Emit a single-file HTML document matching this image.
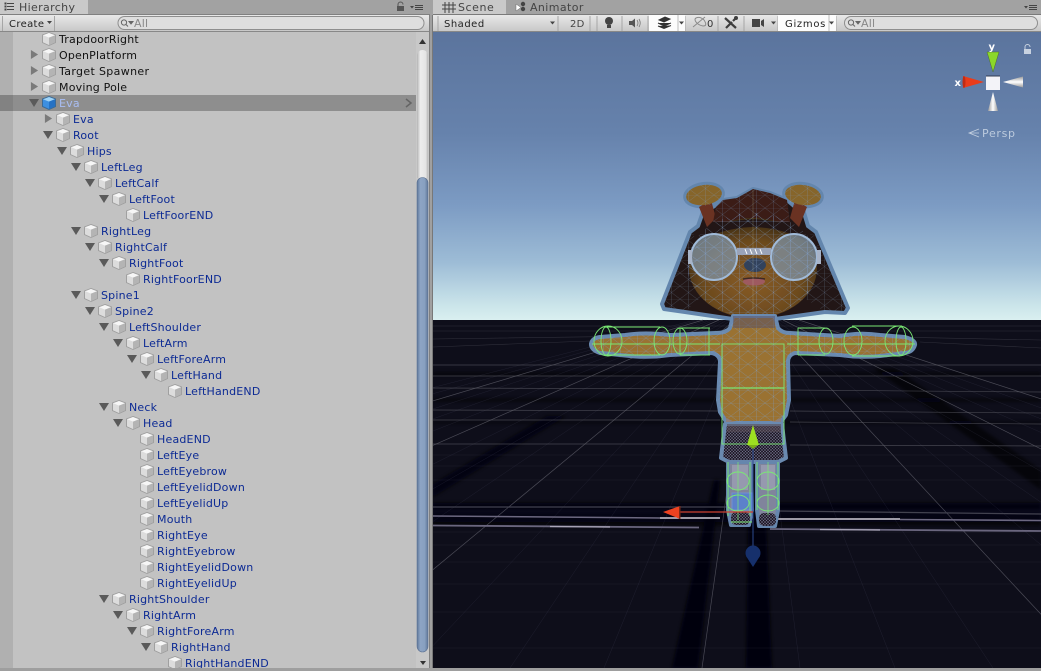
<!DOCTYPE html>
<html><head><meta charset="utf-8"><style>
html,body{margin:0;padding:0;background:#a2a2a2;width:1041px;height:671px;overflow:hidden}
svg{display:block}
text{font-family:"DejaVu Sans","Liberation Sans",sans-serif;font-size:11px;letter-spacing:.2px}
.k{fill:#111}
.b{fill:#0c2a94}
</style></head><body>
<svg width="1041" height="671" viewBox="0 0 1041 671" xmlns="http://www.w3.org/2000/svg">
<defs>
<linearGradient id="sky" x1="0" y1="0" x2="0" y2="1">
<stop offset="0" stop-color="#5b749d"/><stop offset=".35" stop-color="#6682ac"/><stop offset=".6" stop-color="#7c9bc3"/><stop offset=".8" stop-color="#9dbcd6"/><stop offset=".95" stop-color="#cbe5ea"/><stop offset="1" stop-color="#d9eff0"/>
</linearGradient>
<linearGradient id="tb" x1="0" y1="0" x2="0" y2="1"><stop offset="0" stop-color="#e8e8e8"/><stop offset="1" stop-color="#c6c6c6"/></linearGradient>
<linearGradient id="thumb" x1="0" y1="0" x2="1" y2="0"><stop offset="0" stop-color="#5d7699"/><stop offset=".3" stop-color="#8da4c4"/><stop offset=".7" stop-color="#88a0c0"/><stop offset="1" stop-color="#5f7698"/></linearGradient>
<linearGradient id="sb" x1="0" y1="0" x2="1" y2="0"><stop offset="0" stop-color="#b4b4b4"/><stop offset=".3" stop-color="#ededed"/><stop offset=".8" stop-color="#e4e4e4"/><stop offset="1" stop-color="#b8b8b8"/></linearGradient>
<linearGradient id="wc" x1="0" y1="0" x2="0" y2="1"><stop offset="0" stop-color="#999"/><stop offset=".5" stop-color="#fff"/><stop offset="1" stop-color="#999"/></linearGradient>
<linearGradient id="wc2" x1="0" y1="0" x2="1" y2="0"><stop offset="0" stop-color="#999"/><stop offset=".5" stop-color="#fff"/><stop offset="1" stop-color="#999"/></linearGradient>
<radialGradient id="face" cx=".5" cy=".62" r=".55"><stop offset="0" stop-color="#8a5c26"/><stop offset=".7" stop-color="#6c4a1e"/><stop offset="1" stop-color="#443016"/></radialGradient>
<pattern id="wire" width="17" height="13" patternUnits="userSpaceOnUse"><path d="M0 0H17M0 0L17 13M17 0L0 13M8.500 0V13" stroke="#7d9cc6" stroke-width=".5" fill="none" opacity=".55"/></pattern>
<pattern id="mesh" width="3" height="3" patternUnits="userSpaceOnUse"><rect width="3" height="3" fill="#201d2c"/><path d="M0 0L3 3M3 0L0 3" stroke="#70708a" stroke-width=".5"/></pattern>
<filter id="bl"><feGaussianBlur stdDeviation="1.500"/></filter>
<filter id="so"><feGaussianBlur stdDeviation=".35"/></filter>
<clipPath id="sc"><rect x="433" y="32" width="608" height="636"/></clipPath>
<symbol id="c" viewBox="0 0 14 14" overflow="visible">
<path d="M7 0.5L13.5 3V10.5L7 13.5L.5 10.5V3Z" fill="#e6e6e6" stroke="#a0a0a0" stroke-width="1"/>
<path d="M1 3.200L7 5.600L13 3.200L7 1Z" fill="#f6f6f6"/>
<path d="M7 5.600V13L13 10.200V3.200Z" fill="#b4b4b4"/>
<path d="M7 5.600V13L1 10.200V3.200Z" fill="#dcdcdc"/>
</symbol>
<symbol id="r" viewBox="0 0 10 10" overflow="visible"><path d="M1 0L9 5L1 10Z" fill="#7a7a7a"/></symbol>
<symbol id="d" viewBox="0 0 10 10" overflow="visible"><path d="M0 1H10L5 9Z" fill="#5a5a5a"/></symbol>
</defs>

<rect width="1041" height="671" fill="#a2a2a2"/>

<!-- Hierarchy panel -->
<rect x="0" y="31" width="430" height="637" fill="#c2c2c2"/>
<rect x="0" y="31" width="13" height="637" fill="#b0b0b0"/>
<rect x="0" y="0" width="88" height="15" fill="#c9c9c9"/>
<path d="M5 3h1v1H5zM5 6h1v1H5zM5 9h1v1H5zM7 3.500h7M7 6.500h7M7 9.500h7" stroke="#444" stroke-width="1" fill="none"/>
<text x="19" y="11" style="font-size:11px;letter-spacing:.35px" fill="#444">Hierarchy</text>
<rect x="0" y="15" width="430" height="17" fill="url(#tb)"/>
<rect x="0" y="14" width="430" height="1" fill="#808080"/>
<rect x="0" y="31" width="430" height="1" fill="#888"/>
<rect x="2" y="16" width="1" height="15" fill="#a6a6a6"/>
<rect x="54" y="16" width="1" height="15" fill="#a6a6a6"/>
<text x="9" y="27" style="font-size:10px;letter-spacing:.35px" fill="#222">Create</text>
<path d="M47 21h5l-2.500 3z" fill="#444"/>
<rect x="118" y="16.500" width="306" height="13" rx="6.500" fill="#dedede" stroke="#8e8e8e"/>
<circle cx="124" cy="22.500" r="2.600" fill="none" stroke="#666"/><path d="M126 24.500l2 2M129 21.500h4l-2 2.500z" stroke="#666" fill="#666"/>
<text x="134" y="27" style="font-size:11px" fill="#888">All</text>
<path d="M398 6.500v-2a2.500 2.500 0 0 1 5 0" fill="none" stroke="#555"/><rect x="397" y="6" width="7" height="5" fill="#555"/>
<path d="M410 6h4l-2 2.500z" fill="#444"/><path d="M415 5.500h8M415 7.500h8M415 9.500h8" stroke="#444"/>

<rect x="0" y="95" width="416" height="16" fill="#8e8e8e"/>
<rect x="0" y="95" width="13" height="16" fill="#828282"/>
<path d="M406 99l5 4-5 4" fill="none" stroke="#646464" stroke-width="1.500"/>

<use href="#c" x="42" y="32" width="14" height="14"/><text class="k" x="59" y="43">TrapdoorRight</text>
<use href="#r" x="30" y="50" width="9" height="9"/><use href="#c" x="42" y="48" width="14" height="14"/><text class="k" x="59" y="59">OpenPlatform</text>
<use href="#r" x="30" y="66" width="9" height="9"/><use href="#c" x="42" y="64" width="14" height="14"/><text class="k" x="59" y="75" style="letter-spacing:.35px">Target Spawner</text>
<use href="#r" x="30" y="82" width="9" height="9"/><use href="#c" x="42" y="80" width="14" height="14"/><text class="k" x="59" y="91">Moving Pole</text>
<use href="#d" x="29" y="98" width="10" height="10"/>
<path d="M49 96.500L55.500 99V106.500L49 109.500L42.500 106.500V99Z" fill="#3d8fe0" stroke="#3b6a96"/><path d="M43 99.200L49 101.600L55 99.200L49 97Z" fill="#9fd3f6"/><path d="M49 101.600V109L55 106.200V99.200Z" fill="#2672c4"/>
<text x="59" y="107" fill="#a9bdf2">Eva</text>
<use href="#r" x="44" y="114" width="9" height="9"/><use href="#c" x="56" y="112" width="14" height="14"/><text class="b" x="73" y="123">Eva</text>
<use href="#d" x="43" y="130" width="10" height="10"/><use href="#c" x="56" y="128" width="14" height="14"/><text class="b" x="73" y="139">Root</text>
<use href="#d" x="57" y="146" width="10" height="10"/><use href="#c" x="70" y="144" width="14" height="14"/><text class="b" x="87" y="155">Hips</text>
<use href="#d" x="71" y="162" width="10" height="10"/><use href="#c" x="84" y="160" width="14" height="14"/><text class="b" x="101" y="171">LeftLeg</text>
<use href="#d" x="85" y="178" width="10" height="10"/><use href="#c" x="98" y="176" width="14" height="14"/><text class="b" x="115" y="187">LeftCalf</text>
<use href="#d" x="99" y="194" width="10" height="10"/><use href="#c" x="112" y="192" width="14" height="14"/><text class="b" x="129" y="203">LeftFoot</text>
<use href="#c" x="126" y="208" width="14" height="14"/><text class="b" x="143" y="219">LeftFoorEND</text>
<use href="#d" x="71" y="226" width="10" height="10"/><use href="#c" x="84" y="224" width="14" height="14"/><text class="b" x="101" y="235">RightLeg</text>
<use href="#d" x="85" y="242" width="10" height="10"/><use href="#c" x="98" y="240" width="14" height="14"/><text class="b" x="115" y="251">RightCalf</text>
<use href="#d" x="99" y="258" width="10" height="10"/><use href="#c" x="112" y="256" width="14" height="14"/><text class="b" x="129" y="267">RightFoot</text>
<use href="#c" x="126" y="272" width="14" height="14"/><text class="b" x="143" y="283">RightFoorEND</text>
<use href="#d" x="71" y="290" width="10" height="10"/><use href="#c" x="84" y="288" width="14" height="14"/><text class="b" x="101" y="299">Spine1</text>
<use href="#d" x="85" y="306" width="10" height="10"/><use href="#c" x="98" y="304" width="14" height="14"/><text class="b" x="115" y="315">Spine2</text>
<use href="#d" x="99" y="322" width="10" height="10"/><use href="#c" x="112" y="320" width="14" height="14"/><text class="b" x="129" y="331">LeftShoulder</text>
<use href="#d" x="113" y="338" width="10" height="10"/><use href="#c" x="126" y="336" width="14" height="14"/><text class="b" x="143" y="347">LeftArm</text>
<use href="#d" x="127" y="354" width="10" height="10"/><use href="#c" x="140" y="352" width="14" height="14"/><text class="b" x="157" y="363">LeftForeArm</text>
<use href="#d" x="141" y="370" width="10" height="10"/><use href="#c" x="154" y="368" width="14" height="14"/><text class="b" x="171" y="379">LeftHand</text>
<use href="#c" x="168" y="384" width="14" height="14"/><text class="b" x="185" y="395">LeftHandEND</text>
<use href="#d" x="99" y="402" width="10" height="10"/><use href="#c" x="112" y="400" width="14" height="14"/><text class="b" x="129" y="411">Neck</text>
<use href="#d" x="113" y="418" width="10" height="10"/><use href="#c" x="126" y="416" width="14" height="14"/><text class="b" x="143" y="427">Head</text>
<use href="#c" x="140" y="432" width="14" height="14"/><text class="b" x="157" y="443">HeadEND</text>
<use href="#c" x="140" y="448" width="14" height="14"/><text class="b" x="157" y="459">LeftEye</text>
<use href="#c" x="140" y="464" width="14" height="14"/><text class="b" x="157" y="475">LeftEyebrow</text>
<use href="#c" x="140" y="480" width="14" height="14"/><text class="b" x="157" y="491">LeftEyelidDown</text>
<use href="#c" x="140" y="496" width="14" height="14"/><text class="b" x="157" y="507">LeftEyelidUp</text>
<use href="#c" x="140" y="512" width="14" height="14"/><text class="b" x="157" y="523">Mouth</text>
<use href="#c" x="140" y="528" width="14" height="14"/><text class="b" x="157" y="539">RightEye</text>
<use href="#c" x="140" y="544" width="14" height="14"/><text class="b" x="157" y="555">RightEyebrow</text>
<use href="#c" x="140" y="560" width="14" height="14"/><text class="b" x="157" y="571">RightEyelidDown</text>
<use href="#c" x="140" y="576" width="14" height="14"/><text class="b" x="157" y="587">RightEyelidUp</text>
<use href="#d" x="99" y="594" width="10" height="10"/><use href="#c" x="112" y="592" width="14" height="14"/><text class="b" x="129" y="603">RightShoulder</text>
<use href="#d" x="113" y="610" width="10" height="10"/><use href="#c" x="126" y="608" width="14" height="14"/><text class="b" x="143" y="619">RightArm</text>
<use href="#d" x="127" y="626" width="10" height="10"/><use href="#c" x="140" y="624" width="14" height="14"/><text class="b" x="157" y="635">RightForeArm</text>
<use href="#d" x="141" y="642" width="10" height="10"/><use href="#c" x="154" y="640" width="14" height="14"/><text class="b" x="171" y="651">RightHand</text>
<use href="#c" x="168" y="656" width="14" height="14"/><text class="b" x="185" y="667">RightHandEND</text>

<!-- scrollbar -->
<rect x="416" y="32" width="13" height="636" fill="#c8c8c8"/>
<path d="M419 44h7l-3.500-5z" fill="#333"/>
<path d="M417 55.500a5.500 5.500 0 0 1 11 0V178H417Z" fill="url(#sb)"/>
<path d="M417 183a5.500 5.500 0 0 1 11 0V646a5.500 6 0 0 1-11 0Z" fill="url(#thumb)" stroke="#5a6f90" stroke-width=".6"/>
<path d="M420 661h6l-3 4z" fill="#333"/>
<rect x="429" y="15" width="4" height="653" fill="#a0a0a0"/>
<rect x="429" y="15" width="1" height="653" fill="#808080"/>
<rect x="432" y="15" width="1" height="653" fill="#787878"/>

<!-- Scene tabs -->
<rect x="433" y="0" width="73" height="15" fill="#c9c9c9"/>
<path d="M445 2v11M449 2v11M453 2v11M442 5h14M442 9h14" stroke="#444" fill="none" stroke-width="1"/>
<text x="458" y="11" style="font-size:11px;letter-spacing:.55px" fill="#444">Scene</text>
<circle cx="523" cy="4" r="2.200" fill="#444"/><circle cx="523" cy="9" r="2.200" fill="#444"/><path d="M516 4l5 3.500-5 3.500z" fill="#fff" stroke="#555" stroke-width=".4"/>
<text x="530" y="11" style="font-size:11px;letter-spacing:.4px" fill="#444">Animator</text>
<path d="M1024 6h4l-2 2.500z" fill="#444"/><path d="M1029 5.500h8M1029 7.500h8M1029 9.500h8" stroke="#444"/>

<!-- Scene toolbar -->
<rect x="433" y="15" width="608" height="17" fill="url(#tb)"/>
<rect x="433" y="14" width="608" height="1" fill="#7a7a7a"/>
<rect x="433" y="31" width="608" height="1" fill="#888"/>
<path d="M438 16v15M558 16v15M590 16v15M597 16v15M622 16v15M648 16v15M685 16v15M718 16v15M744 16v15M778 16v15M836 16v15" stroke="#a6a6a6" fill="none"/>
<rect x="649" y="15" width="36" height="16" fill="#fcfcfc"/>
<rect x="778" y="15" width="58" height="16" fill="#fcfcfc"/>
<path d="M678 15v16M829 15v16" stroke="#bbb"/>
<text x="444" y="27" style="font-size:10px;letter-spacing:.5px" fill="#222">Shaded</text>
<path d="M550 21.500h5l-2.500 3z" fill="#444"/>
<text x="570" y="27" style="font-size:10px;letter-spacing:.3px" fill="#444">2D</text>
<circle cx="609" cy="21" r="4" fill="#444"/><rect x="607" y="25" width="4" height="3" fill="#444"/>
<path d="M629 21h3l3-2.500v9l-3-2.500h-3z" fill="#555"/><path d="M637 20q2 3 0 6M639 19q2.500 4 0 8" stroke="#777" fill="none" stroke-width=".8"/>
<path d="M659 20l6-3 5 2-6 3zM658 23l6 3 7-3M658 26l6 2.500 7-3" fill="#333" stroke="#333" stroke-width="1"/>
<path d="M679 21.500h5l-2.500 3z" fill="#444"/>
<path d="M693 27l12-10M696 18q4-2 8 2q4 6-1 6q-5-1-7-4q-2-3 0-4" stroke="#8a8a8a" fill="none" stroke-width="1"/>
<text x="707" y="27" style="font-size:10px" fill="#333">0</text>
<path d="M726 28l6-6M736 18l-3 3M725 18l11 10" stroke="#3e3e3e" stroke-width="2.200" fill="none"/><circle cx="736" cy="18" r="2" fill="#3e3e3e"/>
<rect x="752" y="19" width="8" height="8" fill="#444"/><path d="M761 21l3-2v8l-3-2z" fill="#444"/>
<path d="M771 21.500h5l-2.500 3z" fill="#444"/>
<text x="785" y="27" style="font-size:10px;letter-spacing:.7px" fill="#222">Gizmos</text>
<path d="M829 21.500h5l-2.500 3z" fill="#444"/>
<rect x="844.500" y="16.500" width="193" height="13" rx="6.500" fill="#dedede" stroke="#8e8e8e"/>
<circle cx="851" cy="22.500" r="2.600" fill="none" stroke="#666"/><path d="M853 24.500l2 2M856 21.500h4l-2 2.500z" stroke="#666" fill="#666"/>
<text x="861" y="27" style="font-size:11px" fill="#888">All</text>

<!-- Scene view -->
<g clip-path="url(#sc)">
<rect x="433" y="32" width="608" height="288" fill="url(#sky)"/>
<rect x="433" y="320" width="608" height="348" fill="#0e0e1a"/>

<!-- dark bands -->
<g fill="#03030a" filter="url(#bl)">
<path d="M672 668H698L720 480H714Z"/>
<path d="M746 668H772L766 520H748Z"/>
<path d="M433 503H1041V510H433Z" opacity=".9"/>
<path d="M433 398H1041V402H433Z" opacity=".45"/>
<path d="M433 484L547 416H566L433 497Z" opacity=".8"/>
<path d="M433 372H1041V376H433Z" opacity=".5"/>
<path d="M873 368H895L1041 470V490Z" opacity=".6"/>
<path d="M433 421H1041V424H433Z" opacity=".4"/>
<path d="M433 512H1041V522H433Z" opacity=".7"/>
<path d="M433 522H1041V526H433Z" opacity=".5"/>
</g>

<!-- fine grid fan -->
<path d="M695 320L-655 668M699 320L-557 668M707 320L-365 668M711 320L-267 668M715 320L-169 668M723 320L23 668M727 320L121 668M731 320L216 668M739 320L412 668M743 320L510 668M747 320L604 668M755 320L800 668M759 320L895 668M763 320L993 668M771 320L1189 668M775 320L1283 668M779 320L1381 668M787 320L1573 668M791 320L1671 668M795 320L1769 668" stroke="#4f5068" stroke-width=".5" opacity=".28" fill="none"/>
<path d="M433 532H1041M433 545H1041M433 562H1041M433 584H1041M433 612H1041M433 648H1041M433 480H1041M433 466H1041M433 455H1041" stroke="#4f5068" stroke-width=".5" opacity=".25" fill="none"/>
<!-- major grid -->
<path d="M703 320L-459 668M719 320L-75 668M735 320L314 668M751 320L702 668M767 320L1091 668M783 320L1479 668M799 320L1867 668" stroke="#6a6a74" stroke-width=".7" opacity=".65" fill="none"/>
<path d="M433 365H1041M433 376H1041M433 388L720 389M790 390L1041 392M433 410L720 411M790 411L1041 413M433 420L720 420M790 422L1041 424M433 444H720M790 445L1041 446" stroke="#62626c" stroke-width=".7" opacity=".65" fill="none"/>
<path d="M433 339L720 335M790 335L1041 340M433 347L590 341M920 342L1041 348M433 326H1041M433 331H1041" stroke="#4a4a55" stroke-width=".6" opacity=".55" fill="none"/>

<!-- bright lines -->
<path d="M433 507H730M778 511L1041 514" stroke="#42424f" stroke-width="1.300" fill="none"/>
<path d="M433 516L660 518" stroke="#6c6880" stroke-width="1.500" fill="none"/>
<path d="M660 518L720 518M778 519L900 519" stroke="#d0ccd8" stroke-width="1.500" fill="none"/>
<path d="M900 519.500L1041 520.500" stroke="#6c6880" stroke-width="1.600" fill="none"/>
<path d="M433 525.500L699 527.500M770 529L1041 531" stroke="#6a667e" stroke-width="1.800" fill="none"/>
<path d="M550 526.500L610 527M820 529.500L880 530" stroke="#aaa6b8" stroke-width="1.300" fill="none"/>

<g filter="url(#so)">
<!-- Character: hair back -->
<g stroke="#6486ad" stroke-width="4" stroke-linejoin="round">
<ellipse cx="704" cy="195" rx="19" ry="11" transform="rotate(-8 704 195)" fill="#86652a"/>
<ellipse cx="803" cy="195" rx="19" ry="11" transform="rotate(8 803 195)" fill="#86652a"/>
<path d="M705 206L713 207L723 200L737 198L753 189L770 193L787 200L794 206L802 206L808 226L816 232L848 308L845 313L825 312L753 322L685 312L664 309L662 304L690 232L698 226Z" fill="#241816"/>
</g>
<path d="M699 207L707 227L716 218L711 200ZM807 207L799 227L790 218L795 200Z" fill="#6a3324"/>
<ellipse cx="704" cy="195" rx="18" ry="10" transform="rotate(-8 704 195)" fill="#86652a"/>
<ellipse cx="803" cy="195" rx="18" ry="10" transform="rotate(8 803 195)" fill="#86652a"/>
<path d="M713 222L716 207L723 200L737 198L753 189L770 193L787 200L790 222Z" fill="#3a1e18"/>
<ellipse cx="753" cy="268" rx="64" ry="50" fill="url(#face)"/>
<path d="M690 248Q700 222 753 219Q806 222 816 248Q790 228 753 227Q716 228 690 248Z" fill="#221613"/>

<!-- wire overlays: thinner on the hair -->
<ellipse cx="753" cy="265" rx="66" ry="52" fill="url(#wire)"/>
<path d="M693 228L662 305L685 312L702 296ZM811 228L848 310L825 312L802 296Z" fill="url(#wire)" opacity=".6"/>
<path d="M713 222L716 207L723 200L737 198L753 189L770 193L787 200L790 222Z" fill="url(#wire)" opacity=".6"/>
<ellipse cx="704" cy="195" rx="19" ry="11" fill="url(#wire)" opacity=".7"/>
<ellipse cx="803" cy="195" rx="19" ry="11" fill="url(#wire)" opacity=".7"/>
<!-- glasses -->
<circle cx="714" cy="257" r="23" fill="#7f8f9e" fill-opacity=".78" stroke="#a0bad8" stroke-width="2"/>
<circle cx="794" cy="257" r="23" fill="#7f8f9e" fill-opacity=".78" stroke="#a0bad8" stroke-width="2"/>
<circle cx="714" cy="257" r="21" fill="url(#wire)"/>
<circle cx="794" cy="257" r="21" fill="url(#wire)"/>
<rect x="737" y="248" width="34" height="7" fill="#9aa3b8"/>
<path d="M745 249l2 5M750 249l2 5M755 249l2 5M760 249l2 5" stroke="#fff" stroke-width="1"/>
<rect x="688" y="250" width="4" height="14" fill="#a8b4c8"/><rect x="817" y="250" width="4" height="14" fill="#a8b4c8"/>
<ellipse cx="755" cy="265" rx="11" ry="7" fill="#33425c"/>
<ellipse cx="755" cy="265" rx="11" ry="7" fill="url(#wire)"/>
<ellipse cx="754" cy="281.500" rx="11" ry="4" fill="#9e5a60"/>
<path d="M743 279q11-2 22 0" stroke="#3e2b26" stroke-width="1.500" fill="none"/>
<path d="M753 190V320" stroke="#c8c8a0" stroke-width=".5" opacity=".45"/>

<!-- Body -->
<path d="M733 316H775L778 328Q782 333 790 333L840 336Q860 332 880 335L905 337Q916 340 915 345Q913 352 905 353L880 356Q860 358 840 355L795 353Q788 355 788 362L789 400L786 415L780 423L727 423L720 412L718 400L720 362Q720 355 712 353L670 355Q650 358 630 356L600 353Q591 350 591 344Q592 338 600 337L625 335Q645 332 670 335L716 333Q726 333 730 328Z" fill="#9a7230" stroke="#6a8ab0" stroke-width="4" stroke-linejoin="round"/>
<path d="M733 316H775L778 328Q782 333 790 333L840 336Q860 332 880 335L905 337Q916 340 915 345Q913 352 905 353L880 356Q860 358 840 355L795 353Q788 355 788 362L789 400L786 415L780 423L727 423L720 412L718 400L720 362Q720 355 712 353L670 355Q650 358 630 356L600 353Q591 350 591 344Q592 338 600 337L625 335Q645 332 670 335L716 333Q726 333 730 328Z" fill="url(#wire)"/>
<rect x="733" y="316" width="42" height="12" fill="#5b5468" opacity=".55"/>
<path d="M726 418Q753 432 781 418V424H726Z" fill="#8a7f80"/>
<!-- skirt -->
<path d="M725 424H782L786 458L778 462H729L721 458Z" fill="url(#mesh)" stroke="#6a8ab0" stroke-width="4" stroke-linejoin="round"/>
<path d="M727 424H781V432H727Z" fill="#5b4d55" opacity=".6"/>
<!-- legs -->
<path d="M728 462H751L752 510L749 525H731L728 510Z" fill="#80849c" stroke="#6686ad" stroke-width="4" stroke-linejoin="round"/>
<path d="M757 462H778L778 510L775 526H759L757 510Z" fill="#80849c" stroke="#6686ad" stroke-width="4" stroke-linejoin="round"/>
<path d="M732 465H748V490H732ZM761 465H775V490H761Z" fill="#a8acc0" opacity=".55"/>
<rect x="731" y="512" width="19" height="13" rx="5" fill="url(#mesh)"/>
<rect x="759" y="513" width="17" height="13" rx="5" fill="url(#mesh)"/>
<rect x="732" y="493" width="20" height="17" fill="#4d80e0" opacity=".7" stroke="#6e96ea" stroke-width="1"/>
</g>

<!-- Green colliders -->
<g fill="none" stroke="#7ae874" stroke-width=".9">
<path d="M720 344H592M787 344H915" />
<rect x="722" y="344" width="62" height="100"/>
<path d="M722 388H784" stroke-width="1.300"/>
<path d="M607 327H660M607 355H660"/>
<ellipse cx="608" cy="341" rx="14" ry="15"/>
<ellipse cx="606" cy="341" rx="5" ry="14"/>
<ellipse cx="662" cy="341" rx="8" ry="14"/>
<path d="M680 328H710M680 355H710M680 328V355M709 328V355"/>
<ellipse cx="680" cy="341" rx="7" ry="13"/>
<path d="M798 328H825M798 355H825M798 328V355"/>
<ellipse cx="826" cy="341" rx="7" ry="13"/>
<path d="M852 326H902M852 356H900"/>
<ellipse cx="853" cy="341" rx="9" ry="14"/>
<ellipse cx="899" cy="341" rx="14" ry="15"/>
<ellipse cx="901" cy="341" rx="5" ry="14"/>
<path d="M728 462V516M750 462V516M757 462V510M778 462V510"/>
<ellipse cx="738" cy="481" rx="11" ry="9"/>
<ellipse cx="768" cy="481" rx="11" ry="9"/>
<ellipse cx="738" cy="503" rx="11" ry="8"/>
<ellipse cx="768" cy="503" rx="11" ry="8"/>
<path d="M731 522H752"/>
<path d="M738 462V520M768 462V515" stroke-width=".7"/>
</g>
</g>

<!-- Move gizmo -->
<path d="M753 445V546" stroke="#2c4a90" stroke-width="1"/>
<path d="M753 425L747 445H759Z" fill="#9de021"/>
<path d="M748 445H758L753 449Z" fill="#7ab018"/>
<path d="M680 512H753" stroke="#cc4030" stroke-width="1.200"/>
<path d="M663 512L680 506V519Z" fill="#ed4220"/>
<rect x="679" y="506" width="1.500" height="13" fill="#7e2a18"/>
<circle cx="753" cy="553" r="7.500" fill="#16306c"/>
<path d="M746 556L753 567L760 556Z" fill="#16306c"/>

<!-- view gizmo -->
<path d="M993 72L987 52H999Z" fill="#8bd72a" stroke="#4f6e2c" stroke-width=".5"/>
<path d="M984 82L963 76V88Z" fill="#ea3c1a"/>
<ellipse cx="964" cy="82" rx="1.500" ry="6" fill="#c02c14"/>
<path d="M1003 82L1023 76.500V87.500Z" fill="url(#wc)"/>
<path d="M993 92L988 111H998Z" fill="url(#wc2)"/>
<rect x="986" y="76" width="14" height="14" fill="#f3f3f8"/>
<rect x="986" y="75.500" width="14" height="1" fill="#333c52"/>
<text x="988.500" y="50" style="font-size:10px;font-weight:bold;letter-spacing:0" fill="#fff">y</text>
<text x="954.500" y="86" style="font-size:10px;font-weight:bold;letter-spacing:0" fill="#fff">x</text>
<path d="M1025 49v-2a2.500 2.500 0 0 1 5 0" fill="none" stroke="#c8d2e0"/><rect x="1024" y="49" width="7" height="5" fill="#c8d2e0"/>
<path d="M979 129L969 133L979 137M969 133H979" stroke="#c2cfdf" fill="none" stroke-width=".8"/>
<text x="982" y="137" style="font-size:11px;letter-spacing:.7px" fill="#bccadd">Persp</text>
</g>
<rect x="0" y="668" width="1041" height="3" fill="#9e9e9e"/>
</svg>
</body></html>
